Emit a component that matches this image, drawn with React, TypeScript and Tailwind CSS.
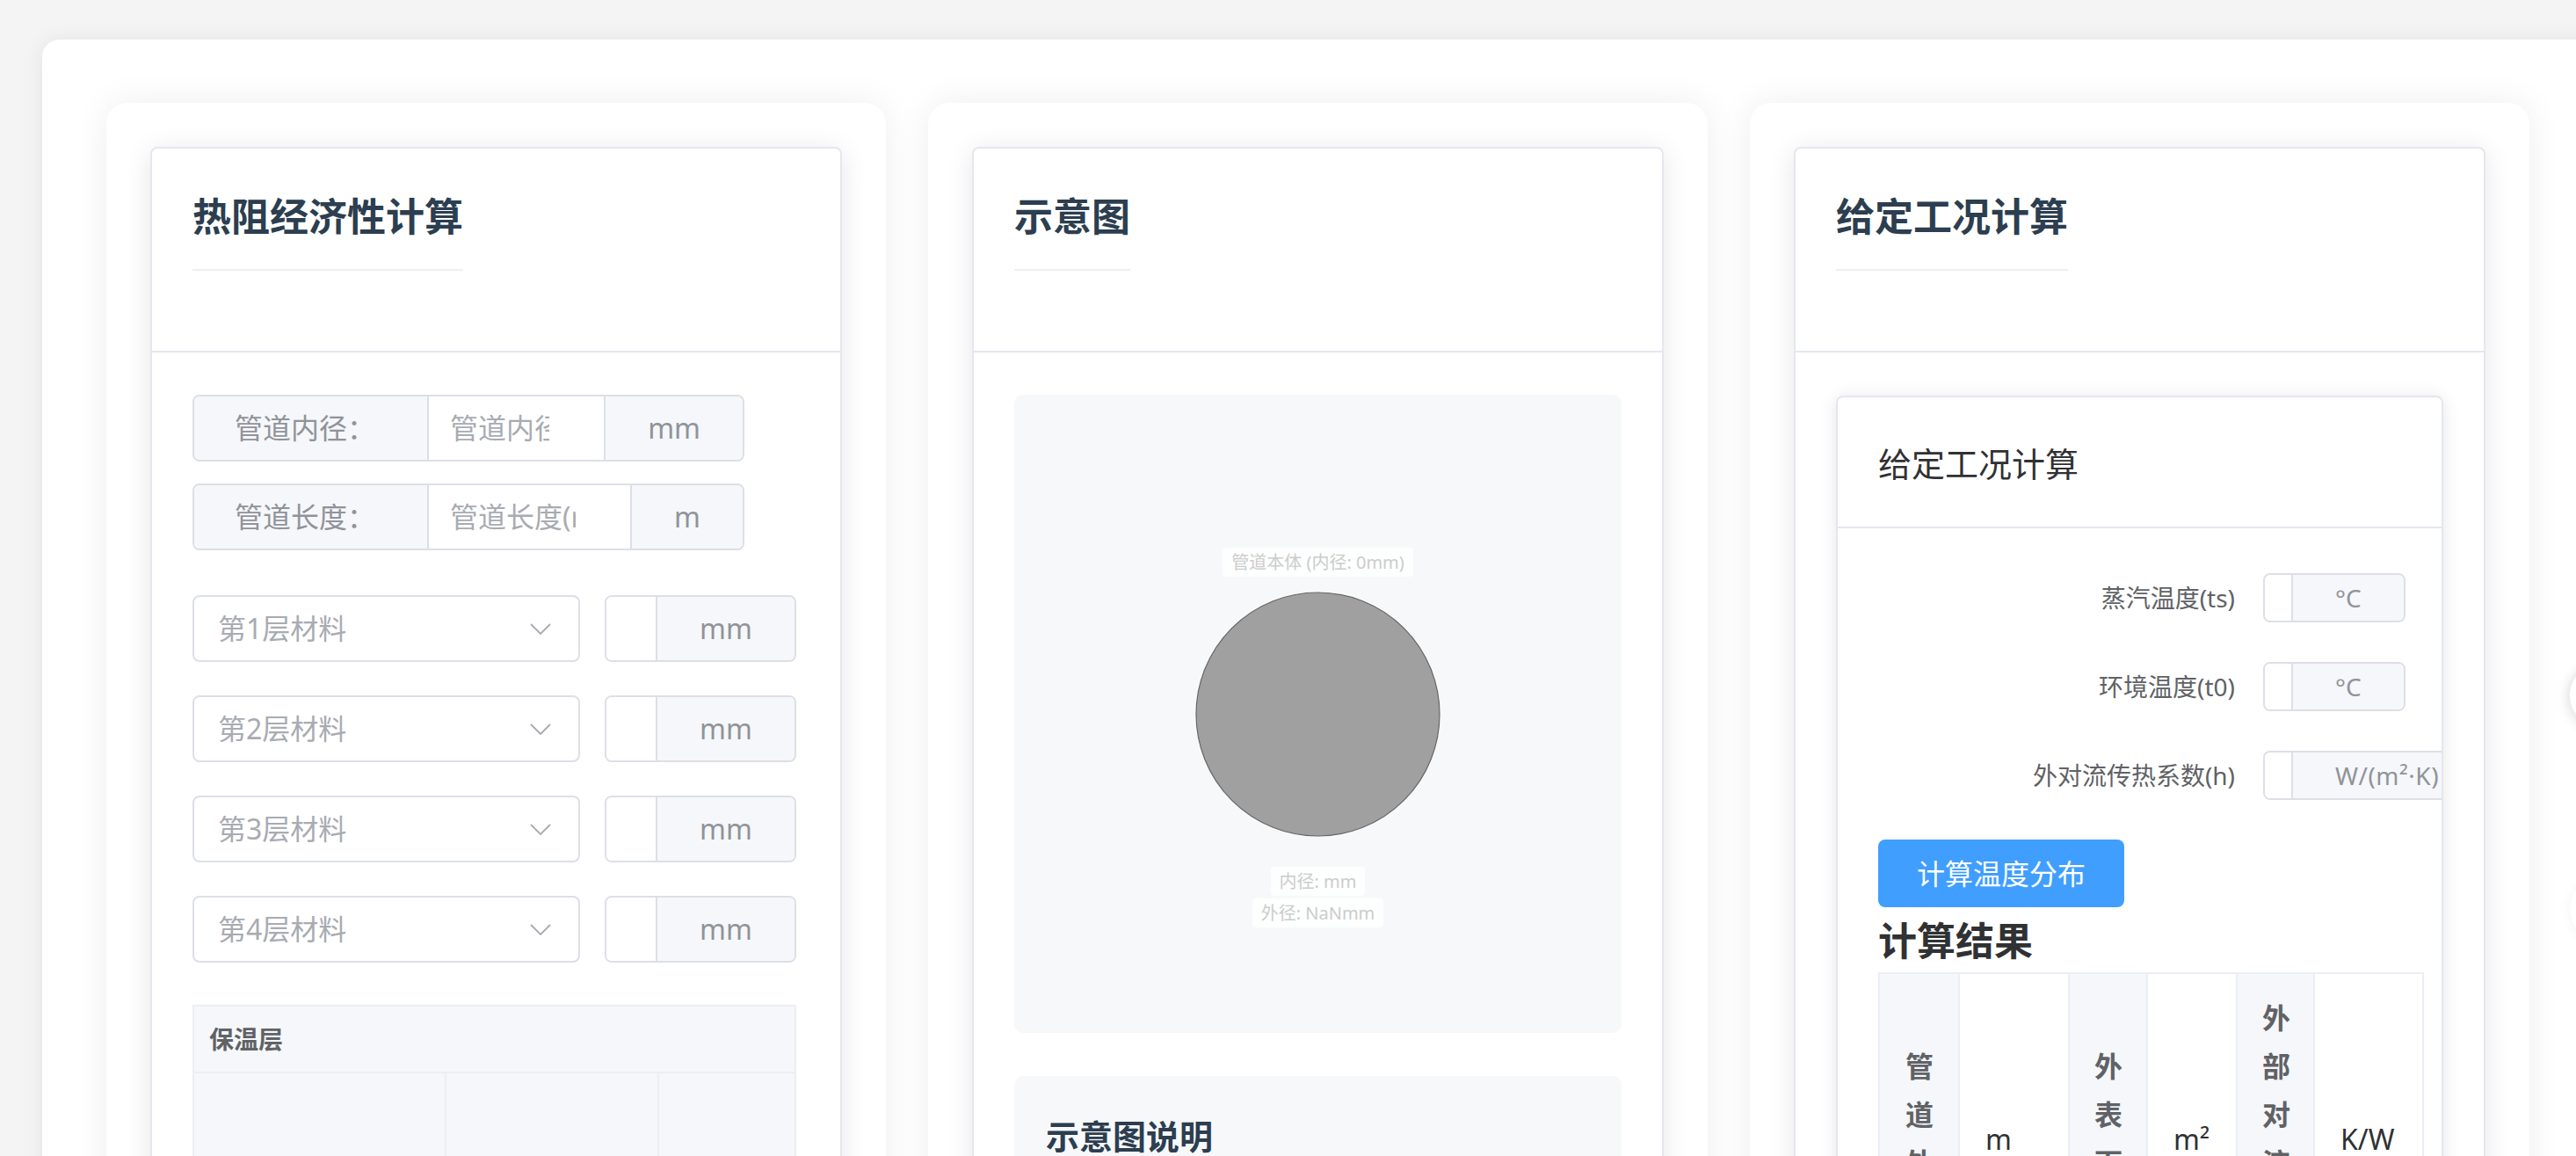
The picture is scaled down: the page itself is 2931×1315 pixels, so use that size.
import React from "react";

function Column({ children }: { children: React.ReactNode }) {
  return (
    <div className="w-[887px] shrink-0 rounded-[24px] bg-white p-[50px] shadow-[0_0_40px_rgba(0,0,0,0.07)]">
      {children}
    </div>
  );
}

function Card({ title, children }: { title: string; children: React.ReactNode }) {
  return (
    <div className="rounded-[8px] border-2 border-[#e4e7ed] bg-white shadow-[0_4px_30px_rgba(0,0,0,0.1)]">
      <div className="border-b-2 border-[#e4e7ed] px-[46px] pt-[51px] pb-[91px]">
        <h2 className="inline-block border-b-2 border-[#eeeeee] pb-[34px] text-[44px] font-bold leading-[52px] text-[#2c3e50]">
          {title}
        </h2>
      </div>
      {children}
    </div>
  );
}

function LabeledInput({ label, placeholder, unit }: { label: string; placeholder: string; unit: string }) {
  return (
    <div className="flex h-[76px] w-[628px] overflow-hidden rounded-[8px] border-2 border-[#dcdfe6] text-[32px]">
      <div className="flex w-[267px] shrink-0 items-center border-r-2 border-[#dcdfe6] bg-[#f5f7fa] pl-[46px] text-[#909399]">
        {label}
      </div>
      <div className="flex min-w-0 flex-1 items-center bg-white pl-[24px] pr-[62px]">
        <div className="min-w-0 flex-1 overflow-hidden whitespace-nowrap text-[#a8abb2]">{placeholder}</div>
      </div>
      <div className="flex shrink-0 items-center border-l-2 border-[#dcdfe6] bg-[#f5f7fa] px-[48px] text-[#909399]">
        {unit}
      </div>
    </div>
  );
}

function LayerRow({ n }: { n: number }) {
  return (
    <div className="flex items-center">
      <div className="flex h-[76px] w-[441px] items-center justify-between rounded-[8px] border-2 border-[#dcdfe6] bg-white pl-[27px] pr-[31px] text-[32px] text-[#a8abb2]">
        <span>{`第${n}层材料`}</span>
        <svg width="24" height="13" viewBox="0 0 24 13">
          <polyline points="1,1 12,12 23,1" fill="none" stroke="#a8abb2" strokeWidth="1.8" />
        </svg>
      </div>
      <div className="ml-[28px] flex h-[76px] w-[218px] overflow-hidden rounded-[8px] border-2 border-[#dcdfe6] text-[32px]">
        <div className="w-[56px] shrink-0 bg-white" />
        <div className="flex flex-1 items-center justify-center border-l-2 border-[#dcdfe6] bg-[#f5f7fa] text-[#909399]">
          mm
        </div>
      </div>
    </div>
  );
}

function FormRow({ label, unit, wide }: { label: string; unit: string; wide?: boolean }) {
  return (
    <div className="flex h-[56px] items-center">
      <div className="w-[438px] shrink-0 pr-[32px] text-right text-[28px] text-[#606266]">{label}</div>
      <div className="flex h-[56px] shrink-0 overflow-hidden rounded-[8px] border-2 border-[#dcdfe6] text-[28px]">
        <div className="w-[30px] shrink-0 bg-white" />
        <div
          className={
            wide
              ? "flex shrink-0 items-center whitespace-nowrap border-l-2 border-[#dcdfe6] bg-[#f5f7fa] pl-[48px] pr-[60px] tracking-[0.5px] text-[#909399]"
              : "flex shrink-0 items-center whitespace-nowrap border-l-2 border-[#dcdfe6] bg-[#f5f7fa] px-[48px] text-[#909399]"
          }
        >
          {unit}
        </div>
      </div>
    </div>
  );
}

function DiagLabel({ children, className }: { children: React.ReactNode; className?: string }) {
  return (
    <span
      className={
        "rounded-[4px] bg-white/80 px-[10px] text-[20px] leading-[33px] whitespace-nowrap text-[#cccccc] " + (className ?? "")
      }
    >
      {children}
    </span>
  );
}

export default function App() {
  return (
    <div className="relative h-screen w-screen overflow-hidden bg-[#f4f4f4] font-['Noto_Sans','Noto_Sans_CJK_SC',sans-serif]">
      <div className="ml-[48px] mt-[45px] flex h-[1700px] w-[2990px] items-stretch gap-[48px] rounded-[20px] bg-white pl-[73px] pt-[72px] shadow-[0_0_24px_rgba(0,0,0,0.07)]">
        {/* Column 1 */}
        <Column>
          <Card title="热阻经济性计算">
            <div className="px-[46px] pt-[48px] pb-[60px]">
              <LabeledInput label="管道内径：" placeholder="管道内径(mm)" unit="mm" />
              <div className="mt-[25px]">
                <LabeledInput label="管道长度：" placeholder="管道长度(m)" unit="m" />
              </div>
              <div className="mt-[51px] flex flex-col gap-[38px]">
                <LayerRow n={1} />
                <LayerRow n={2} />
                <LayerRow n={3} />
                <LayerRow n={4} />
              </div>
              <div className="mt-[48px] w-[687px] border-2 border-[#ebeef5]">
                <div className="flex h-[76px] items-center border-b-2 border-[#ebeef5] bg-[#f5f7fa] pl-[17px] text-[28px] font-bold text-[#606266]">
                  保温层
                </div>
                <div className="flex h-[300px] bg-[#f5f7fa]">
                  <div className="w-[287px] border-r-2 border-[#ebeef5]" />
                  <div className="w-[242px] border-r-2 border-[#ebeef5]" />
                  <div className="flex-1" />
                </div>
              </div>
            </div>
          </Card>
        </Column>

        {/* Column 2 */}
        <Column>
          <Card title="示意图">
            <div className="px-[46px] pt-[48px] pb-[60px]">
              <div className="flex h-[726px] flex-col items-center rounded-[10px] bg-[#f7f8fa] pt-[174px]">
                <DiagLabel>管道本体 (内径: 0mm)</DiagLabel>
                <svg className="mt-[17px]" width="279" height="279" viewBox="0 0 279 279">
                  <circle cx="139.5" cy="139.5" r="138.5" fill="#a0a0a0" stroke="#666666" strokeWidth="1.2" />
                </svg>
                <DiagLabel className="mt-[34px]">内径: mm</DiagLabel>
                <DiagLabel className="mt-[3px]">外径: NaNmm</DiagLabel>
              </div>
              <div className="mt-[49px] h-[320px] rounded-[10px] bg-[#f7f8fa] pl-[36px] pt-[45px]">
                <h3 className="text-[38px] font-bold leading-[46px] text-[#2c3e50]">示意图说明</h3>
              </div>
            </div>
          </Card>
        </Column>

        {/* Column 3 */}
        <Column>
          <Card title="给定工况计算">
            <div className="px-[46px] pt-[49px] pb-[60px]">
              <div className="overflow-hidden rounded-[8px] border-2 border-[#e4e7ed] bg-white shadow-[0_2px_20px_rgba(0,0,0,0.1)]">
                <div className="border-b-2 border-[#e4e7ed] pl-[46px] pt-[52px] pb-[49px]">
                  <div className="text-[38px] leading-[46px] text-[#303133]">给定工况计算</div>
                </div>
                <div className="pl-[46px] pt-[51px] pb-[40px]">
                  <div className="flex flex-col gap-[45px]">
                    <FormRow label="蒸汽温度(ts)" unit="°C" />
                    <FormRow label="环境温度(t0)" unit="°C" />
                    <FormRow label="外对流传热系数(h)" unit="W/(m²·K)" wide />
                  </div>
                  <button className="mt-[45px] flex h-[77px] w-[280px] items-center justify-center rounded-[8px] bg-[#409eff] text-[32px] text-white">
                    计算温度分布
                  </button>
                  <div className="mt-[12px] text-[44px] font-bold leading-[53px] text-[#303133]">计算结果</div>
                  <div className="mt-[9px] flex w-[621px] border-2 border-[#ebeef5] text-[32px] leading-[55px]">
                    <div className="flex w-[91px] shrink-0 items-center border-r-2 border-[#ebeef5] bg-[#f5f7fa] py-[22px] pl-[29px] pr-[20px] font-bold text-[#606266]">
                      管道外径
                    </div>
                    <div className="flex w-[125px] shrink-0 items-center border-r-2 border-[#ebeef5] pl-[29px] text-[#303133]">
                      m
                    </div>
                    <div className="flex w-[89px] shrink-0 items-center border-r-2 border-[#ebeef5] bg-[#f5f7fa] py-[22px] pl-[28px] pr-[20px] font-bold text-[#606266]">
                      外表面积
                    </div>
                    <div className="flex w-[102px] shrink-0 items-center border-r-2 border-[#ebeef5] pl-[29px] text-[#303133]">
                      m²
                    </div>
                    <div className="flex w-[88px] shrink-0 items-center border-r-2 border-[#ebeef5] bg-[#f5f7fa] py-[22px] pl-[28px] pr-[20px] font-bold text-[#606266]">
                      外部对流热阻
                    </div>
                    <div className="flex flex-1 items-center pl-[29px] text-[#303133]">K/W</div>
                  </div>
                </div>
              </div>
            </div>
          </Card>
        </Column>
      </div>

      <div className="absolute left-[2921px] top-[753px] h-[76px] w-[76px] rounded-full border-[3px] border-[#eeeeee] bg-white shadow-[0_2px_14px_rgba(0,0,0,0.12)]" />
      <div className="absolute left-[2924px] top-[996px] h-[76px] w-[76px] rounded-full bg-white shadow-[0_2px_14px_rgba(0,0,0,0.05)]" />
    </div>
  );
}
